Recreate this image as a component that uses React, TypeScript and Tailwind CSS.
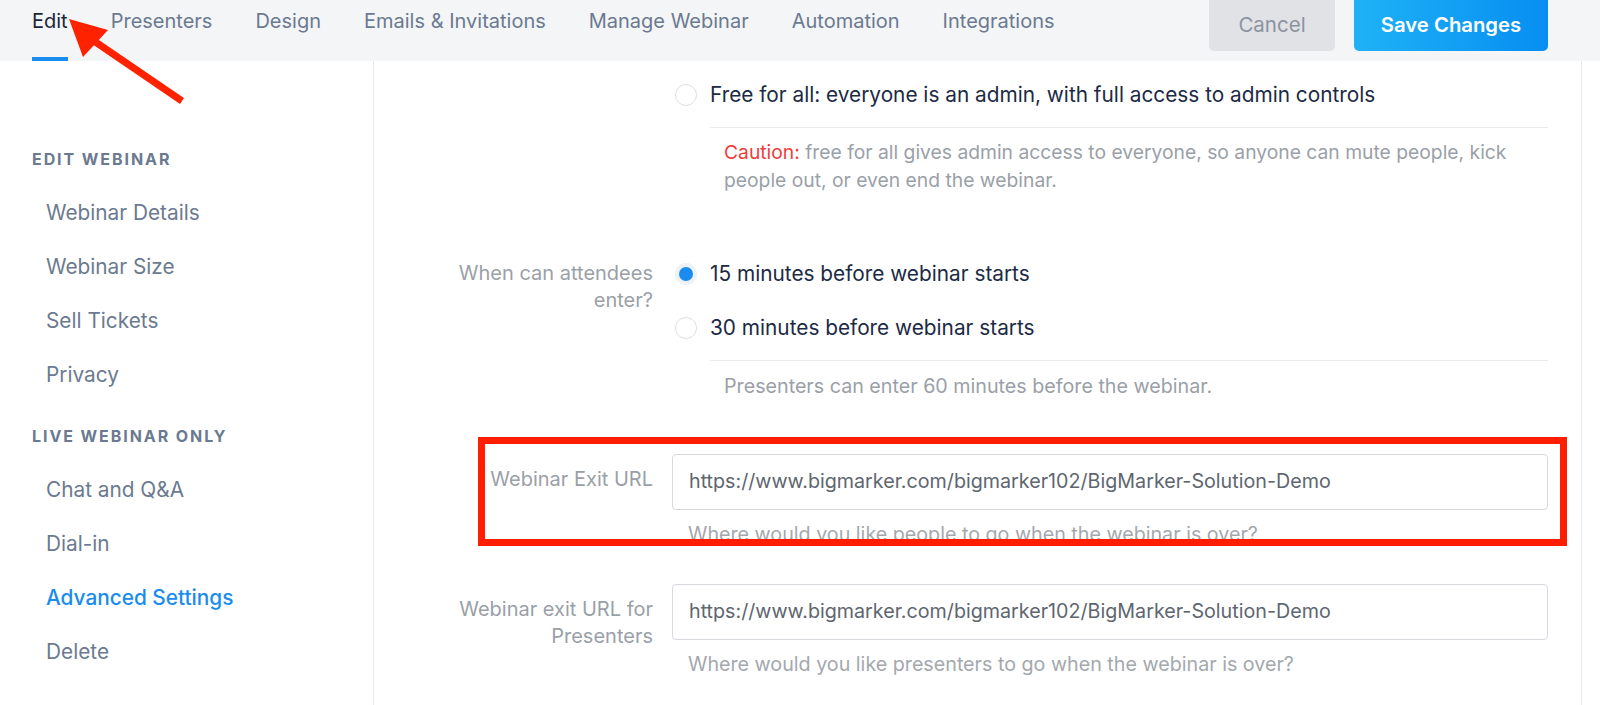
import React from 'react'

const tabs = ['Edit', 'Presenters', 'Design', 'Emails & Invitations', 'Manage Webinar', 'Automation', 'Integrations']

const editItems = ['Webinar Details', 'Webinar Size', 'Sell Tickets', 'Privacy']
const liveItems = ['Chat and Q&A', 'Dial-in', 'Advanced Settings', 'Delete']

const EXIT_URL = 'https://www.bigmarker.com/bigmarker102/BigMarker-Solution-Demo'

function Radio({ checked }: { checked?: boolean }) {
  if (checked) {
    return (
      <span className="flex h-[22px] w-[22px] shrink-0 items-center justify-center rounded-full bg-[#eef1f5]">
        <span className="h-[14px] w-[14px] rounded-full bg-[#1a8cf0]" />
      </span>
    )
  }
  return <span className="h-[22px] w-[22px] shrink-0 rounded-full border border-[#dcdfe3] bg-white" />
}

function RadioOption({ checked, label }: { checked?: boolean; label: string }) {
  return (
    <div className="ml-[3px] flex h-[28px] items-center gap-[13px] text-[20.8px] text-[#1c2a45]">
      <Radio checked={checked} />
      <span>{label}</span>
    </div>
  )
}

function Row({ label, labelPad = 'pt-0', children }: { label?: React.ReactNode; labelPad?: string; children: React.ReactNode }) {
  return (
    <div className="grid grid-cols-[279px_876px] gap-x-[19px]">
      <div className={`text-right text-[20px] leading-[27px] text-[#9aa0a8] ${labelPad}`}>{label}</div>
      <div>{children}</div>
    </div>
  )
}

function UrlField({ help }: { help: string }) {
  return (
    <div>
      <div className="flex h-[56px] items-center rounded-[4px] border border-[#d6d9dd] bg-white pl-[16px] text-[19.7px] text-[#5e6670]">
        {EXIT_URL}
      </div>
      <p className="mt-[10px] pl-[16px] text-[19.7px] leading-[28px] text-[#a3a8ae]">{help}</p>
    </div>
  )
}

function SideSection({ title, items, className }: { title: string; items: string[]; className?: string }) {
  return (
    <div className={className}>
      <div className="pl-[32px] text-[16px] font-bold uppercase leading-[20px] tracking-[0.12em] text-[#6b7a90]">{title}</div>
      <ul className="mt-[17px]">
        {items.map((item) => (
          <li
            key={item}
            className={`flex h-[54px] items-center pl-[46px] text-[20.8px] ${
              item === 'Advanced Settings' ? 'font-medium text-[#1a8cf0]' : 'text-[#6b7a90]'
            }`}
          >
            {item}
          </li>
        ))}
      </ul>
    </div>
  )
}

export default function App() {
  return (
    <div className="relative h-[705px] w-[1600px] overflow-hidden bg-white font-['Inter',sans-serif]">
      <header className="flex h-[61px] items-start justify-between bg-[#f4f5f7]">
        <nav className="flex gap-[43px] pl-[32px]">
          {tabs.map((tab, i) => (
            <div
              key={tab}
              className={`h-[61px] pt-[8px] text-[20px] leading-[27px] ${
                i === 0 ? 'border-b-4 border-[#1a8cf0] text-[#1c2538]' : 'text-[#6b7a90]'
              }`}
            >
              {tab}
            </div>
          ))}
        </nav>
        <div className="flex gap-[19px] pr-[52px]">
          <button className="h-[51px] w-[126px] rounded-b-[5px] bg-[#e1e2e6] text-[20.5px] text-[#8b93a0]">Cancel</button>
          <button className="h-[51px] w-[194px] rounded-b-[5px] bg-gradient-to-r from-[#1fb2f6] to-[#078ef1] text-[20.3px] font-semibold text-white">
            Save Changes
          </button>
        </div>
      </header>

      <div className="flex h-[644px]">
        <aside className="w-[374px] shrink-0 border-r border-[#e8e9ec] pt-[88px]">
          <SideSection title="Edit Webinar" items={editItems} />
          <SideSection title="Live Webinar Only" items={liveItems} className="mt-[24px]" />
        </aside>

        <main className="w-[1208px] shrink-0 border-r border-[#e8e9ec] pt-[20px]">
          <Row>
            <RadioOption label="Free for all: everyone is an admin, with full access to admin controls" />
            <p className="mt-[18px] ml-[38px] border-t border-[#e9eaec] pt-[10px] pl-[14px] text-[19.3px] leading-[28px] text-[#9aa0a8]">
              <span className="text-[#f03c3c]">Caution:</span> free for all gives admin access to everyone, so anyone can mute people, kick
              people out, or even end the webinar.
            </p>
          </Row>

          <div className="mt-[66px]">
            <Row
              label={
                <>
                  When can attendees
                  <br />
                  enter?
                </>
              }
            >
              <div className="flex flex-col gap-[26px]">
                <RadioOption checked label="15 minutes before webinar starts" />
                <RadioOption label="30 minutes before webinar starts" />
              </div>
              <p className="mt-[18px] ml-[38px] border-t border-[#e9eaec] pt-[11px] pl-[14px] text-[19.7px] leading-[28px] text-[#9aa0a8]">
                Presenters can enter 60 minutes before the webinar.
              </p>
            </Row>
          </div>

          <div className="mt-[54px]">
            <Row label="Webinar Exit URL" labelPad="pt-[12px]">
              <UrlField help="Where would you like people to go when the webinar is over?" />
            </Row>
          </div>

          <div className="mt-[36px]">
            <Row
              labelPad="pt-[12px]"
              label={
                <>
                  Webinar exit URL for
                  <br />
                  Presenters
                </>
              }
            >
              <UrlField help="Where would you like presenters to go when the webinar is over?" />
            </Row>
          </div>
        </main>
      </div>

      {/* annotation: highlight box */}
      <div className="pointer-events-none absolute left-[478px] top-[437px] h-[109px] w-[1089px] border-[7px] border-[#ff1f00]" />

      {/* annotation: arrow pointing at Edit tab */}
      <svg className="pointer-events-none absolute left-0 top-0" width="200" height="120" viewBox="0 0 200 120">
        <line x1="182" y1="101" x2="94" y2="41" stroke="#ff2200" strokeWidth="7" />
        <polygon points="69,19 108,30 83,57" fill="#ff2200" />
      </svg>
    </div>
  )
}
